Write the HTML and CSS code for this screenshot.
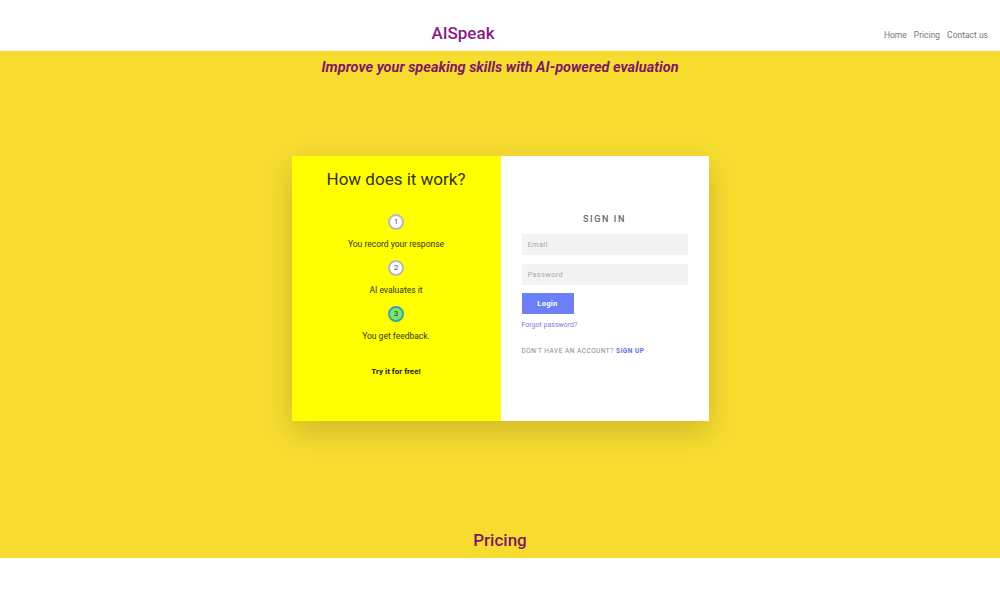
FILE: index.html
```html
<!DOCTYPE html>
<html lang="en">
<head>
  <meta charset="UTF-8" />
  <meta name="viewport" content="width=device-width, initial-scale=1.0"/>
  <title>AISpeak</title>
  <link rel="stylesheet" href="styles.css">
</head>
<body>

  <header class="topbar">
    <div class="brand">AISpeak</div>
    <nav class="nav">
      <a href="#">Home</a>
      <a href="#">Pricing</a>
      <a href="#">Contact us</a>
    </nav>
  </header>

  <section class="hero">
    <h1 class="tagline">Improve your speaking skills with AI-powered evaluation</h1>

    <div class="card">
      <div class="how">
        <h2>How does it work?</h2>
        <div class="step">
          <span class="num">1</span>
          <p>You record your response</p>
        </div>
        <div class="step">
          <span class="num">2</span>
          <p>AI evaluates it</p>
        </div>
        <div class="step">
          <span class="num active">3</span>
          <p>You get feedback.</p>
        </div>
        <div class="try">Try it for free!</div>
      </div>

      <div class="signin">
        <h3>SIGN IN</h3>
        <input type="text" placeholder="Email" />
        <input type="password" placeholder="Password" />
        <button>Login</button>
        <a class="forgot" href="#">Forgot password?</a>
        <div class="signup">DON'T HAVE AN ACCOUNT? <a href="#">SIGN UP</a></div>
      </div>
    </div>

    <h2 class="pricing">Pricing</h2>
  </section>

</body>
</html>
```

FILE: styles.css
```css
body {
  margin: 0;
  font-family: Roboto, 'Noto Sans', sans-serif;
  background: #fff;
  color: #333;
}

.topbar {
  height: 50px;
  display: flex;
  align-items: center;
  padding: 0 12px 0 42px;
  border-bottom: 1px solid #f4f4f4;
}

.brand {
  flex: 1;
  text-align: center;
  font-size: 17px;
  font-weight: 500;
  color: #8a1a86;
  margin-top: 16px;
}

.nav {
  display: flex;
  gap: 7px;
  margin-top: 19px;
}

.nav a {
  font-size: 8.5px;
  color: #777;
  text-decoration: none;
}

.hero {
  background: #f7dc30;
  padding: 8px 0 7px;
  text-align: center;
}

.tagline {
  margin: 0;
  font-size: 14.5px;
  line-height: 18px;
  font-style: italic;
  font-weight: 700;
  color: #7d1a62;
}

.card {
  width: 417px;
  height: 265px;
  margin: 79px auto 0;
  display: grid;
  grid-template-columns: 209px 208px;
  box-shadow: 0 10px 28px rgba(0, 0, 0, 0.16);
}

.how {
  background: #ffff00;
  padding-top: 11px;
  display: flex;
  flex-direction: column;
  align-items: center;
}

.how h2 {
  margin: 0 0 23px;
  font-size: 17px;
  line-height: 24px;
  font-weight: 400;
  color: #333;
}

.step {
  display: flex;
  flex-direction: column;
  align-items: center;
  margin-bottom: 10px;
}

.num {
  width: 12px;
  height: 12px;
  border: 2px solid #bbb;
  border-radius: 50%;
  background: #fff;
  font-size: 8px;
  line-height: 12px;
  color: #555;
}

.num.active {
  background: #7ee66c;
  border-color: #36a7a0;
  color: #333;
}

.step p {
  margin: 8px 0 0;
  font-size: 8.5px;
  line-height: 12px;
  color: #333;
}

.try {
  margin-top: 14px;
  font-size: 8px;
  line-height: 12px;
  font-weight: 700;
  color: #222;
}

.signin {
  background: #fff;
  padding: 57px 21px 0;
  display: flex;
  flex-direction: column;
  align-items: flex-start;
}

.signin h3 {
  align-self: stretch;
  margin: 0 0 9px;
  font-size: 9px;
  line-height: 12px;
  font-weight: 500;
  letter-spacing: 1.6px;
  color: #666;
}

.signin input {
  width: 166px;
  height: 21px;
  box-sizing: border-box;
  border: none;
  background: #f3f3f3;
  padding: 0 6px;
  margin-bottom: 9px;
  font-family: inherit;
  font-size: 7.5px;
  letter-spacing: 0.3px;
}

.signin input::placeholder {
  color: #aaa;
}

.signin button {
  width: 52px;
  height: 21px;
  border: none;
  background: #6b7ff6;
  color: #fff;
  font-family: inherit;
  font-size: 7.5px;
  font-weight: 700;
  letter-spacing: 0.3px;
  margin-top: -1px;
  padding: 0;
}

.forgot {
  margin-top: 6px;
  font-size: 7px;
  line-height: 10px;
  color: #7d7fd0;
  text-decoration: none;
}

.signup {
  margin-top: 16px;
  font-size: 6.5px;
  line-height: 10px;
  letter-spacing: 0.5px;
  color: #888;
}

.signup a {
  color: #5b6fe6;
  font-weight: 700;
  text-decoration: none;
}

.pricing {
  margin: 108px 0 0;
  font-size: 17px;
  line-height: 22px;
  font-weight: 500;
  color: #7d1a62;
}
```
